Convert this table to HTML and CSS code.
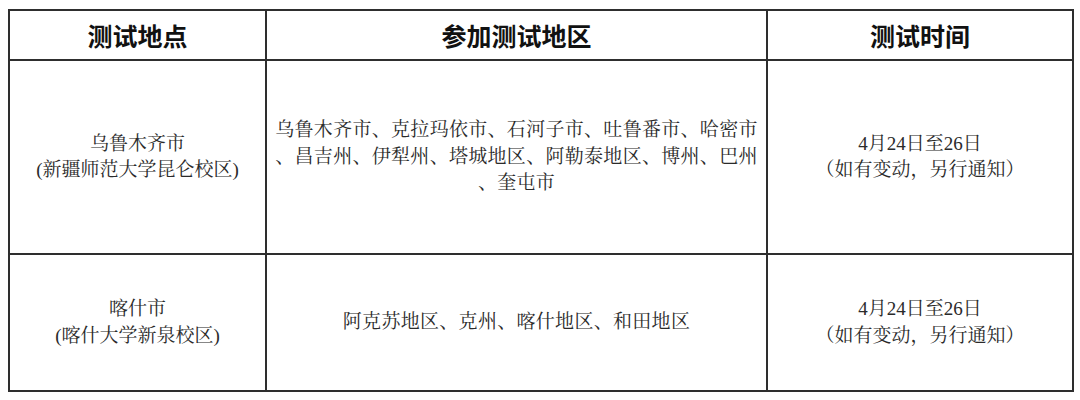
FILE: index.html
```html
<!DOCTYPE html>
<html lang="zh-CN">
<head>
<meta charset="utf-8">
<link rel="stylesheet" href="styles.css">
</head>
<body>
<div class="wrap">
<table class="tbl">
  <colgroup>
    <col class="c1">
    <col class="c2">
    <col class="c3">
  </colgroup>
  <thead>
    <tr class="head">
      <th>测试地点</th>
      <th>参加测试地区</th>
      <th>测试时间</th>
    </tr>
  </thead>
  <tbody>
    <tr class="r1">
      <td>乌鲁木齐市<br>(新疆师范大学昆仑校区)</td>
      <td class="areas">乌鲁木齐市、克拉玛依市、石河子市、吐鲁番市、哈密市<br>、昌吉州、伊犁州、塔城地区、阿勒泰地区、博州、巴州<br>、奎屯市</td>
      <td>4月24日至26日<br>（如有变动，另行通知）</td>
    </tr>
    <tr class="r2">
      <td>喀什市<br>(喀什大学新泉校区)</td>
      <td class="areas">阿克苏地区、克州、喀什地区、和田地区</td>
      <td>4月24日至26日<br>（如有变动，另行通知）</td>
    </tr>
  </tbody>
</table>
</div>
</body>
</html>
```

FILE: styles.css
```css
html, body {
  margin: 0;
  padding: 0;
  background: #ffffff;
}

.wrap {
  padding: 9px 0 0 8px;
}

.tbl {
  width: 1064px;
  height: 383px;
  border-collapse: collapse;
  table-layout: fixed;
  border: 2px solid #4a4a4a;
}

.c1 { width: 257px; }
.c2 { width: 501px; }
.c3 { width: 306px; }

.tbl th,
.tbl td {
  border: 2px solid #2e2e2e;
  text-align: center;
  vertical-align: middle;
  padding: 0;
}

.tbl th {
  font-family: "Noto Sans CJK SC", sans-serif;
  font-weight: 700;
  font-size: 25px;
  color: #111111;
  height: 48px;
  line-height: 30px;
}

.tbl td {
  font-family: "Liberation Serif", "Noto Serif CJK SC", "Noto Sans CJK SC", serif;
  font-size: 19px;
  line-height: 26.5px;
  color: #2a2a2a;
}

.tbl td.areas {
  letter-spacing: 0.3px;
}

.r1 td { height: 191px; }
.r2 td { height: 134px; }
```
